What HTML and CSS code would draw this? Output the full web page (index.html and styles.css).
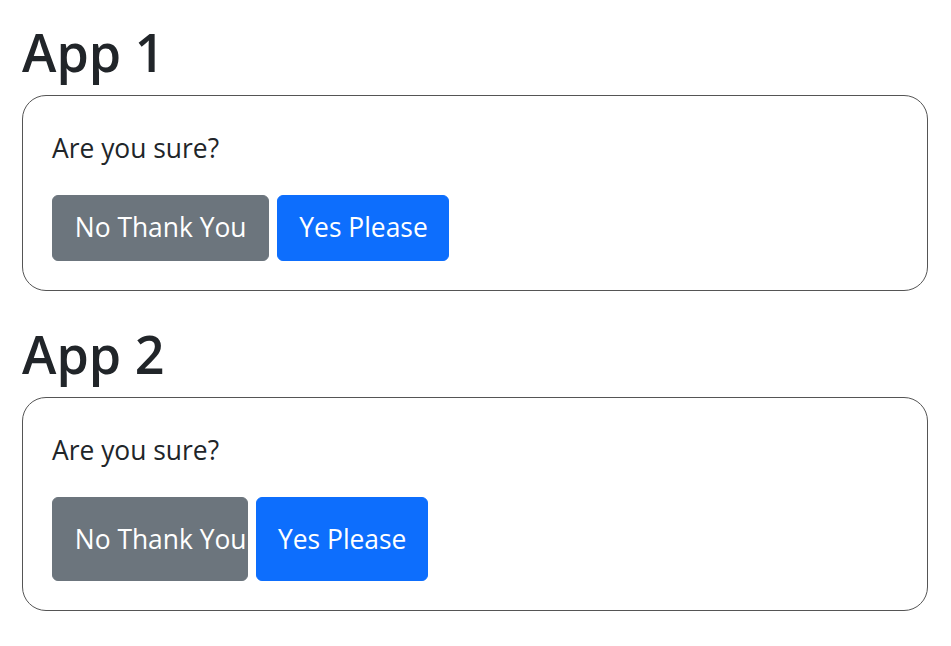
FILE: index.html
```html
<!DOCTYPE html>
<html lang="en">
<head>
<meta charset="utf-8">
<title>Apps</title>
<link rel="stylesheet" href="styles.css">
</head>
<body>
<main class="page">
  <section class="app">
    <h1 class="app-title">App 1</h1>
    <div class="card">
      <p class="question">Are you sure?</p>
      <div class="actions">
        <button class="btn btn-secondary" type="button">No Thank You</button>
        <button class="btn btn-primary" type="button">Yes Please</button>
      </div>
    </div>
  </section>
  <section class="app">
    <h1 class="app-title">App 2</h1>
    <div class="card">
      <p class="question">Are you sure?</p>
      <div class="actions actions-tall">
        <button class="btn btn-secondary btn-fixed" type="button">No Thank You</button>
        <button class="btn btn-primary" type="button">Yes Please</button>
      </div>
    </div>
  </section>
</main>
</body>
</html>
```

FILE: styles.css
```css
* {
  box-sizing: border-box;
}

html, body {
  margin: 0;
  background: #ffffff;
}

body {
  font-family: "Open Sans", "Noto Sans", sans-serif;
  font-size: 26.4px;
  line-height: 1.5;
  color: #212529;
}

.page {
  padding: 20.6px 23px 0 22px;
}

.app {
  margin-bottom: 31.5px;
}

.app-title {
  margin: 0 0 12.5px;
  font-size: 52px;
  font-weight: 600;
  line-height: 1.2;
}

.card {
  border: 1px solid #555555;
  border-radius: 24px;
  padding: 32.5px 29px 29.5px;
}

.question {
  margin: 0 0 26px;
}

.actions {
  display: flex;
  gap: 8px;
  align-items: stretch;
}

.btn {
  font-family: inherit;
  font-size: 26.4px;
  line-height: 1.5;
  color: #ffffff;
  border: 1px solid transparent;
  border-radius: 6px;
  padding: 12.8px 21.8px 11.6px;
  white-space: nowrap;
  cursor: pointer;
}

.btn-secondary {
  background: #6c757d;
  border-color: #6c757d;
}

.btn-primary {
  background: #0d6efd;
  border-color: #0d6efd;
  padding-left: 21px;
  padding-right: 20.5px;
}

.actions-tall .btn {
  height: 84px;
  display: flex;
  align-items: center;
  padding-top: 2px;
  padding-bottom: 0;
}

.btn-fixed {
  width: 196px;
  overflow: hidden;
}
```
